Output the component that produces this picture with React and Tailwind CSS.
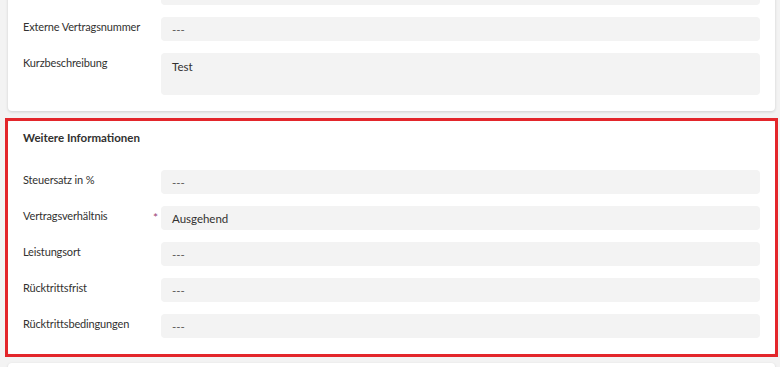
const font = { fontFamily: 'Lato, "Noto Sans", sans-serif' }

function Field({ label, value, required, tall }) {
  return (
    <div className="flex">
      <div className="w-[138px] shrink-0 pt-[2px] pr-[3px] flex justify-between whitespace-nowrap text-[11px] tracking-[-0.15px] text-[#323130]">
        <span>{label}</span>
        {required && <span className="pt-[1px] text-[#9b3f74] text-[12px]">*</span>}
      </div>
      <div
        className={`flex-1 rounded-[4px] bg-[#f3f3f3] px-[11px] text-[11.5px] ${
          tall ? 'h-[42px] pt-[5px]' : 'h-[24px] flex items-center pt-[2px]'
        } ${value === '---' ? 'text-[#605e5c]' : 'text-[#323130]'}`}
      >
        {value}
      </div>
    </div>
  )
}

export default function App() {
  return (
    <div className="h-[367px] overflow-hidden bg-[#f3f3f3] pl-[8px] pr-[5px]" style={font}>
      <div className="-mt-[31px] flex flex-col">
        <div className="rounded-[4px] bg-white px-[15px] pt-[12px] pb-[16px] shadow-[0_1px_3px_rgba(0,0,0,0.15)] flex flex-col gap-[12px]">
          <Field label="Vertragsnummer" value="---" />
          <Field label="Externe Vertragsnummer" value="---" />
          <Field label="Kurzbeschreibung" value="Test" tall />
        </div>

        <div className="mt-[7px] -mx-[3px] border-[3px] border-[#e3262b]">
          <div className="rounded-[4px] bg-white px-[15px] pt-[9px] pb-[16px]">
            <div className="text-[11.5px] font-bold text-[#323130] h-[16px] leading-[16px]">Weitere Informationen</div>
            <div className="mt-[24px] flex flex-col gap-[12px]">
              <Field label="Steuersatz in %" value="---" />
              <Field label="Vertragsverhältnis" value="Ausgehend" required />
              <Field label="Leistungsort" value="---" />
              <Field label="Rücktrittsfrist" value="---" />
              <Field label="Rücktrittsbedingungen" value="---" />
            </div>
          </div>
        </div>

        <div className="mt-[6px] h-[40px] rounded-[4px] bg-white shadow-[0_1px_3px_rgba(0,0,0,0.15)]" />
      </div>
    </div>
  )
}
